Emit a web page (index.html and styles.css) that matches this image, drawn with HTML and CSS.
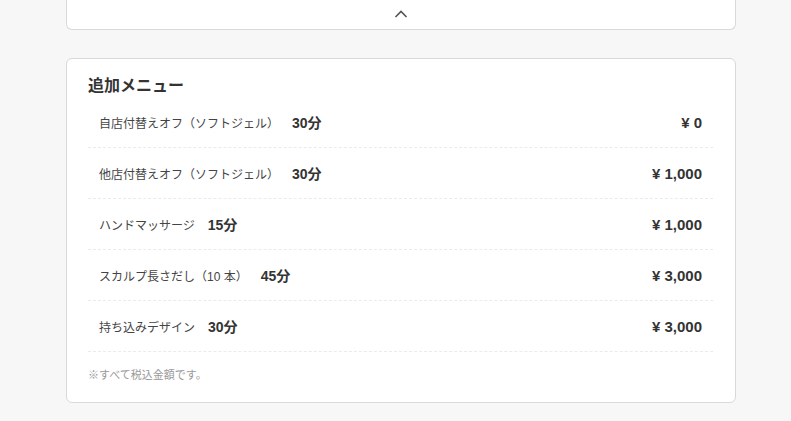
FILE: index.html
```html
<!DOCTYPE html>
<html lang="ja">
<head>
<meta charset="utf-8">
<link rel="stylesheet" href="styles.css">
</head>
<body>
<div class="page">
  <div class="card card-top">
    <button class="toggle" aria-label="閉じる">
      <svg width="14" height="8" viewBox="0 0 14 8"><path d="M1.5 7 L7 1.5 L12.5 7" fill="none" stroke="#555" stroke-width="1.6"/></svg>
    </button>
  </div>
  <section class="card card-menu">
    <h2 class="title">追加メニュー</h2>
    <ul class="menu">
      <li class="row"><span class="name">自店付替えオフ（ソフトジェル）</span><span class="dur">30分</span><span class="price">¥ 0</span></li>
      <li class="row"><span class="name">他店付替えオフ（ソフトジェル）</span><span class="dur">30分</span><span class="price">¥ 1,000</span></li>
      <li class="row"><span class="name">ハンドマッサージ</span><span class="dur">15分</span><span class="price">¥ 1,000</span></li>
      <li class="row"><span class="name">スカルプ長さだし（10 本）</span><span class="dur">45分</span><span class="price">¥ 3,000</span></li>
      <li class="row"><span class="name">持ち込みデザイン</span><span class="dur">30分</span><span class="price">¥ 3,000</span></li>
    </ul>
    <p class="note">※すべて税込金額です。</p>
  </section>
</div>
</body>
</html>
```
FILE: styles.css
```css
html, body {
  margin: 0;
  padding: 0;
  background: #f7f7f7;
}
body {
  font-family: "Liberation Sans", "Noto Sans CJK JP", sans-serif;
  color: #333;
}
.page {
  width: 670px;
  margin-left: 66px;
  display: flex;
  flex-direction: column;
  gap: 28px;
}
.card {
  background: #fff;
  border: 1px solid #d9d9d9;
  border-radius: 6px;
  box-sizing: border-box;
}
.card-top {
  height: 30px;
  border-top: none;
  border-radius: 0 0 6px 6px;
  display: flex;
  justify-content: center;
  align-items: flex-start;
}
.toggle {
  border: none;
  background: none;
  padding: 0;
  margin: 10px 0 0 0;
  width: 14px;
  height: 8px;
  display: flex;
}
.card-menu {
  padding: 15px 22px 19px 21px;
}
.title {
  margin: 0;
  font-size: 16px;
  line-height: 23px;
  font-weight: 700;
  color: #333;
}
.menu {
  list-style: none;
  margin: 0;
  padding: 0;
}
.row {
  height: 50px;
  display: flex;
  align-items: center;
  padding: 0 11px;
  border-bottom: 1px dashed #ebebeb;
}
.name {
  font-size: 12px;
  color: #444;
}
.dur {
  margin-left: 13px;
  font-size: 14px;
  font-weight: 700;
  color: #333;
}
.price {
  margin-left: auto;
  font-size: 15px;
  font-weight: 700;
  color: #333;
}
.note {
  margin: 15px 0 0 0;
  font-size: 11px;
  line-height: 16px;
  color: #999;
}
```
